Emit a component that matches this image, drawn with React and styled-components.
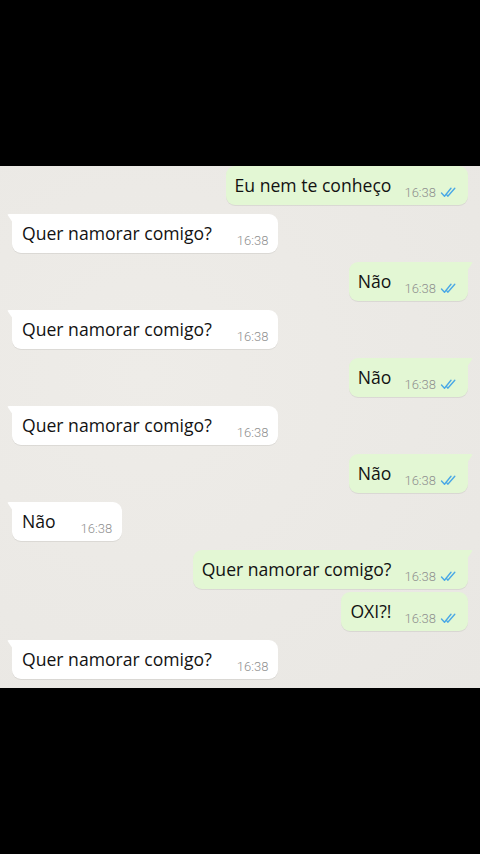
import React from "react";
import styled, { createGlobalStyle } from "styled-components";

const Global = createGlobalStyle`
  html, body { margin: 0; padding: 0; background: #000; }
  body { font-family: "Open Sans", Roboto, "Liberation Sans", sans-serif; }
  * { box-sizing: border-box; }
`;

const Screen = styled.div`
  width: 480px;
  height: 854px;
  display: flex;
  flex-direction: column;
  background: #000;
  overflow: hidden;
`;

const Band = styled.div`
  height: ${(p) => p.$h}px;
  flex: none;
  background: #000;
`;

const Chat = styled.div`
  height: 522px;
  flex: none;
  background: radial-gradient(circle at 30% 40%, #eeece8 0%, #ebe9e5 60%, #e9e7e3 100%);
  display: flex;
  flex-direction: column;
  padding: 0 12px;
  overflow: hidden;
`;

const Row = styled.div`
  display: flex;
  justify-content: ${(p) => (p.$out ? "flex-end" : "flex-start")};
  margin-top: ${(p) => p.$mt}px;
`;

const Bubble = styled.div`
  position: relative;
  display: flex;
  align-items: flex-start;
  height: 39px;
  padding: 8px ${(p) => (p.$out ? "11px" : "10px")} 5px ${(p) => (p.$out ? "9px" : "10px")};
  background: ${(p) => (p.$out ? "#e3f7d4" : "#ffffff")};
  border-radius: 9px;
  border-top-left-radius: ${(p) => (!p.$out && p.$tail ? "0" : "9px")};
  border-top-right-radius: ${(p) => (p.$out && p.$tail ? "0" : "9px")};
  box-shadow: 0 1px 0.5px rgba(0, 0, 0, 0.07);

  &::before {
    content: "";
    display: ${(p) => (p.$tail ? "block" : "none")};
    position: absolute;
    top: 0;
    width: 6px;
    height: 9px;
    background: ${(p) => (p.$out ? "#e3f7d4" : "#ffffff")};
    ${(p) =>
      p.$out
        ? "right: -5px; clip-path: polygon(0 0, 100% 0, 0 100%); border-top-right-radius: 2px;"
        : "left: -5px; clip-path: polygon(0 0, 100% 0, 100% 100%); border-top-left-radius: 2px;"}
  }
`;

const Text = styled.span`
  font-size: 17.6px;
  line-height: 22px;
  color: #121212;
  white-space: nowrap;
`;

const Meta = styled.span`
  display: flex;
  align-items: center;
  align-self: flex-end;
  margin-left: ${(p) => (p.$out ? "13px" : "25px")};
  gap: 4px;
`;

const Time = styled.span`
  font-family: Roboto, "Open Sans", sans-serif;
  font-weight: 300;
  font-size: 13px;
  line-height: 15px;
  color: #8f8f8f;
  white-space: nowrap;
`;

const Ticks = () => (
  <svg width="17" height="11" viewBox="0 0 17 11" fill="none" stroke="#4aa8e6" strokeWidth="1.4" strokeLinecap="round" strokeLinejoin="round">
    <path d="M1.5 6 L4.5 9.2 L11 1.2" />
    <path d="M6.6 7.6 L7.8 9.2 L14.8 1.2" />
  </svg>
);

const messages = [
  { out: true, text: "Eu nem te conheço", tail: false },
  { out: false, text: "Quer namorar comigo?", tail: true },
  { out: true, text: "Não", tail: true },
  { out: false, text: "Quer namorar comigo?", tail: true },
  { out: true, text: "Não", tail: true },
  { out: false, text: "Quer namorar comigo?", tail: true },
  { out: true, text: "Não", tail: true },
  { out: false, text: "Não", tail: true },
  { out: true, text: "Quer namorar comigo?", tail: true },
  { out: true, text: "OXI?!", tail: false },
  { out: false, text: "Quer namorar comigo?", tail: true },
];

export default function App() {
  return (
    <>
      <Global />
      <Screen>
        <Band $h={166} />
        <Chat>
          {messages.map((m, i) => {
            const prev = messages[i - 1];
            const mt = i === 0 ? 0 : prev.out === m.out ? 3 : 9;
            return (
              <Row key={i} $out={m.out} $mt={mt}>
                <Bubble $out={m.out} $tail={m.tail}>
                  <Text>{m.text}</Text>
                  <Meta $out={m.out}>
                    <Time>16:38</Time>
                    {m.out && <Ticks />}
                  </Meta>
                </Bubble>
              </Row>
            );
          })}
        </Chat>
        <Band $h={166} />
      </Screen>
    </>
  );
}
